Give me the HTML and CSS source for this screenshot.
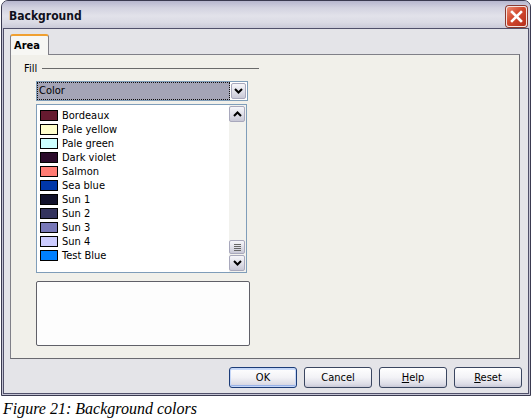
FILE: index.html
```html
<!DOCTYPE html>
<html>
<head>
<meta charset="utf-8">
<link rel="stylesheet" href="styles.css">
</head>
<body>
<div class="window">
  <div class="titlebar">
    <span class="title">Background</span>
    <span class="close"><svg width="13" height="13" viewBox="0 0 13 13"><path d="M2 2 L11 11 M11 2 L2 11" stroke="#fff" stroke-width="2.6" stroke-linecap="square"/></svg></span>
  </div>
  <div class="client">
    <div class="tabs"><div class="tab">Area</div></div>
    <div class="panel">
      <div class="fill-head"><span class="fill-label">Fill</span><span class="rule"></span></div>
      <div class="dropdown">
        <div class="dd-value">Color</div>
        <div class="sb-btn dd-btn"><svg width="9" height="6" viewBox="0 0 9 6"><path d="M1 1 L4.5 4.5 L8 1" fill="none" stroke="#000" stroke-width="2"/></svg></div>
      </div>
      <div class="listbox">
        <ul class="items">
          <li><span class="swatch" style="background:#661a30"></span>Bordeaux</li>
          <li><span class="swatch" style="background:#ffffcc"></span>Pale yellow</li>
          <li><span class="swatch" style="background:#ccffff"></span>Pale green</li>
          <li><span class="swatch" style="background:#2a0a2a"></span>Dark violet</li>
          <li><span class="swatch" style="background:#ff7b73"></span>Salmon</li>
          <li><span class="swatch" style="background:#0037a8"></span>Sea blue</li>
          <li><span class="swatch" style="background:#10102a"></span>Sun 1</li>
          <li><span class="swatch" style="background:#33335e"></span>Sun 2</li>
          <li><span class="swatch" style="background:#7878b8"></span>Sun 3</li>
          <li><span class="swatch" style="background:#ccccff"></span>Sun 4</li>
          <li><span class="swatch" style="background:#0080ff"></span>Test Blue</li>
        </ul>
        <div class="scrollbar">
          <div class="sb-btn up"><svg width="9" height="6" viewBox="0 0 9 6"><path d="M1 5 L4.5 1.5 L8 5" fill="none" stroke="#000" stroke-width="2"/></svg></div>
          <div class="sb-track">
            <div class="sb-btn thumb"><span class="grip"></span></div>
          </div>
          <div class="sb-btn down"><svg width="9" height="6" viewBox="0 0 9 6"><path d="M1 1 L4.5 4.5 L8 1" fill="none" stroke="#000" stroke-width="2"/></svg></div>
        </div>
      </div>
      <div class="preview"></div>
    </div>
    <div class="buttons">
      <button class="btn default">OK</button>
      <button class="btn">Cancel</button>
      <button class="btn"><u>H</u>elp</button>
      <button class="btn"><u>R</u>eset</button>
    </div>
  </div>
</div>
<p class="caption">Figure 21: Background colors</p>
</body>
</html>
```
FILE: styles.css
```css
* { box-sizing: border-box; }
body {
  margin: 0;
  background: #ffffff;
  font-family: "DejaVu Sans Condensed", "Liberation Sans", sans-serif;
  font-size: 11px;
  color: #000;
}
.window {
  margin-left: 1px;
  width: 530px;
  height: 396px;
  border: 1px solid #3a3a50;
  border-radius: 7px 7px 0 0;
  background: #c4c4d4;
  display: flex;
  flex-direction: column;
}
.titlebar {
  height: 27px;
  flex: none;
  display: flex;
  align-items: center;
  justify-content: space-between;
  padding: 3px 3px 0 7px;
  border-radius: 6px 6px 0 0;
  background: linear-gradient(#b6b6ce 0%, #d2d2e0 25%, #e2e2ea 55%, #dadae4 80%, #cacad8 100%);
}
.title {
  font-weight: bold;
  font-size: 12px;
  color: #10101c;
}
.close {
  width: 21px;
  height: 21px;
  border: 1px solid #f4e4e0;
  border-radius: 3px;
  background: linear-gradient(135deg, #ec8a70 0%, #d2492e 45%, #b52e1c 100%);
  box-shadow: 0 0 0 1px #8a3a30;
  display: flex;
  align-items: center;
  justify-content: center;
}
.client {
  flex: 1;
  margin: 0 1px 1px 1px;
  border: 1px solid #50506a;
  background: #e4e4e8;
  padding: 5px 0 0 6px;
  display: flex;
  flex-direction: column;
}
.tabs {
  display: flex;
  height: 20px;
}
.tab {
  position: relative;
  z-index: 1;
  width: 39px;
  height: 21px;
  border: 1px solid #808088;
  border-bottom: none;
  border-top: 2px solid #f0a030;
  border-radius: 3px 3px 0 0;
  background: #f7f7f4;
  font-weight: bold;
  font-size: 11px;
  padding: 3px 0 0 3px;
}
.panel {
  width: 510px;
  height: 305px;
  border: 1px solid #808088;
  border-right-color: #6a6a70;
  border-bottom-color: #6a6a70;
  background: #f1f0ea;
}
.fill-head {
  width: 248px;
  display: flex;
  align-items: center;
  padding: 6px 0 0 13px;
  height: 21px;
}
.fill-label { line-height: 14px; }
.rule {
  flex: 1;
  height: 1px;
  background: #6a6a6a;
  margin-left: 5px;
}
.dropdown {
  margin: 5px 0 0 25px;
  width: 212px;
  height: 20px;
  border: 1px solid #7f9db9;
  background: #fff;
  display: flex;
  align-items: center;
  padding: 0 1px 0 0;
}
.dd-value {
  flex: 1;
  height: 18px;
  background: #a4a4b6;
  border: 1px dotted #111;
  padding-left: 1px;
  line-height: 16px;
}
.sb-btn {
  width: 16px;
  height: 16px;
  border: 1px solid #a8a8bc;
  border-radius: 2px;
  background: linear-gradient(#f6f6fa, #dcdce6 60%, #c8c8d6);
  display: flex;
  align-items: center;
  justify-content: center;
  flex: none;
}
.dd-btn {
  width: 15px;
  height: 16px;
  margin-left: 1px;
}
.listbox {
  margin: 3px 0 0 25px;
  width: 211px;
  height: 169px;
  border: 1px solid #7f9db9;
  background: #fff;
  display: flex;
}
.items {
  flex: 1;
  list-style: none;
  margin: 0;
  padding: 3px 0 0 3px;
}
.items li {
  height: 14px;
  display: flex;
  align-items: center;
}
.swatch {
  width: 18px;
  height: 11px;
  border: 1px solid #000;
  margin-right: 4px;
  flex: none;
}
.scrollbar {
  width: 17px;
  display: flex;
  flex-direction: column;
  align-items: flex-start;
  background: #f2f2ee;
  padding: 1px 0;
}
.sb-track {
  flex: 1;
  display: flex;
  flex-direction: column;
  justify-content: flex-end;
  padding-bottom: 1px;
}
.thumb {
  height: 14px;
}
.grip {
  width: 7px;
  height: 7px;
  background: repeating-linear-gradient(#666 0 1px, transparent 1px 2px);
}
.preview {
  margin: 8px 0 0 25px;
  width: 214px;
  height: 65px;
  border: 1px solid #606068;
  border-radius: 2px;
  background: #fdfdfd;
}
.buttons {
  display: flex;
  justify-content: flex-end;
  gap: 7px;
  margin-top: 8px;
  padding-right: 6px;
}
.btn {
  width: 68px;
  height: 21px;
  border: 1px solid #3a4660;
  border-radius: 3px;
  background: linear-gradient(#ffffff 0%, #f2f2f6 50%, #dcdce6 85%, #c8c8d6 100%);
  font-family: "DejaVu Sans Condensed", "Liberation Sans", sans-serif;
  font-size: 11px;
  color: #000;
  padding: 0;
}
.btn.default {
  border-color: #1c3c78;
  box-shadow: inset 0 0 0 1px #c4d6f8, inset 0 2px 0 #cadbfa, inset 0 -2px 0 #98b2e8;
}
.caption {
  margin: 4px 0 0 3px;
  font-family: "Liberation Serif", serif;
  font-style: italic;
  font-size: 16px;
  line-height: 18px;
}
```
